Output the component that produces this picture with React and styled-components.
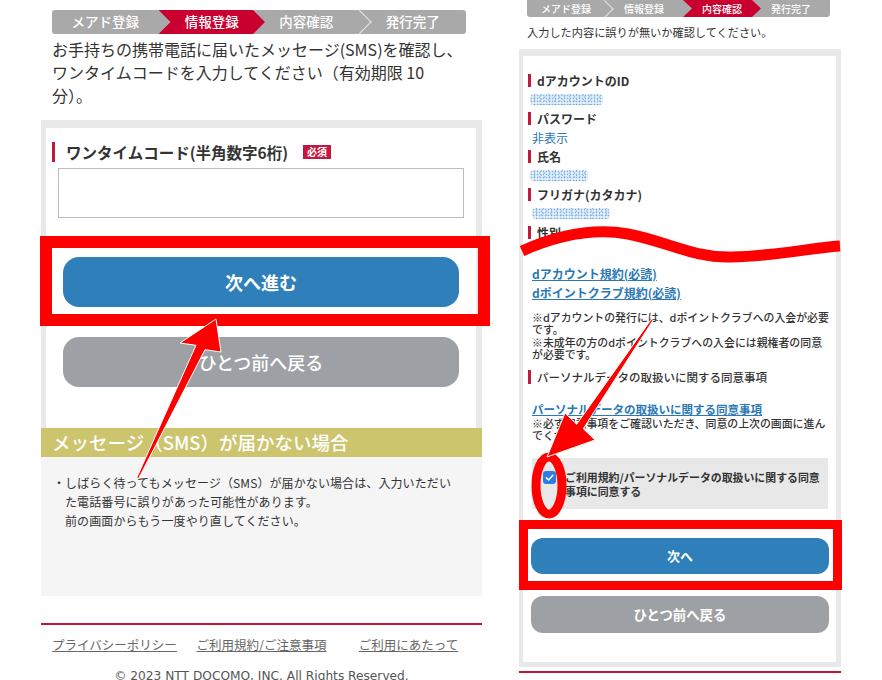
import React from "react";
import styled, { createGlobalStyle, css } from "styled-components";

const GlobalStyle = createGlobalStyle`
  html, body { margin: 0; padding: 0; background: #fff; }
  body {
    font-family: "Noto Sans CJK JP", "Noto Sans", sans-serif;
    color: #333;
  }
  * { box-sizing: border-box; }
`;

const RED = "#c9002f";
const BAR = "#c11a3f";
const BLUE = "#2e7fba";
const GREY_BTN = "#9da1a5";
const FRAME = "#e9e9e9";

const Canvas = styled.div`
  position: relative;
  width: 882px;
  height: 680px;
  overflow: hidden;
  display: flex;
  align-items: flex-start;
  gap: 37px;
  padding-left: 41px;
`;

/* ---------- progress steps ---------- */
const Steps = styled.ol`
  list-style: none;
  margin: ${(p) => p.$m};
  padding: 0;
  display: flex;
  width: ${(p) => p.$w}px;
  height: ${(p) => p.$h}px;
  background: #a9a9a9;
  border-radius: ${(p) => p.$r};
  overflow: hidden;
`;

const Step = styled.li`
  position: relative;
  flex: 1;
  display: flex;
  align-items: center;
  justify-content: center;
  color: #fff;
  font-size: ${(p) => p.$fs}px;
  font-weight: 500;
  line-height: 1;
  white-space: nowrap;
  ${(p) =>
    p.$active &&
    css`
      background: ${RED};
      margin-right: -${p.$d}px;
      z-index: 1;
      clip-path: polygon(
        0 0,
        calc(100% - ${p.$d}px) 0,
        100% 50%,
        calc(100% - ${p.$d}px) 100%,
        0 100%,
        ${p.$d}px 50%
      );
    `}
  ${(p) =>
    p.$sep &&
    css`
      &::after {
        content: "";
        position: absolute;
        top: 50%;
        right: -${p.$s / 2}px;
        width: ${p.$s}px;
        height: ${p.$s}px;
        border-top: 1px solid #e4e4e4;
        border-right: 1px solid #e4e4e4;
        transform: translateY(-50%) rotate(45deg);
      }
    `}
`;

/* ---------- left screen ---------- */
const LeftScreen = styled.section`
  width: 441px;
  flex: none;
  display: flex;
  flex-direction: column;
`;

const Lead = styled.p`
  margin: 4px 0 0 11px;
  font-size: 16px;
  line-height: 23px;
  color: #333;
  white-space: nowrap;
`;

const CodePanel = styled.div`
  margin-top: 13px;
  padding: 8px 6px 0 5px;
  background: ${FRAME};
`;

const CodeCard = styled.div`
  background: #fff;
  padding: 14px 0 41px;
  display: flex;
  flex-direction: column;
`;

const LabelRow = styled.div`
  display: flex;
  align-items: center;
  margin: ${(p) => p.$m};
  height: ${(p) => p.$h}px;
`;

const BarLabel = styled.span`
  display: flex;
  align-items: center;
  height: 100%;
  font-size: ${(p) => p.$fs}px;
  font-weight: ${(p) => p.$fw || 700};
  color: #333;
  white-space: nowrap;
  &::before {
    content: "";
    flex: none;
    width: 3px;
    height: ${(p) => p.$bar}px;
    background: ${BAR};
    margin-right: ${(p) => p.$gap}px;
  }
`;

const Required = styled.span`
  margin-left: 15px;
  height: 14px;
  padding: 0 4px;
  background: #c4163e;
  color: #fff;
  font-size: 10px;
  font-weight: 700;
  line-height: 14px;
`;

const CodeInput = styled.input`
  display: block;
  margin: 6px 12px 0;
  height: 50px;
  border: 1px solid #bdbdbd;
  background: #fff;
  font-size: 16px;
  padding: 0 10px;
  outline: none;
`;

const Button = styled.button`
  display: block;
  border: none;
  color: #fff;
  font-family: inherit;
  text-align: center;
  cursor: pointer;
  background: ${(p) => (p.$primary ? BLUE : GREY_BTN)};
  height: ${(p) => p.$h}px;
  margin: ${(p) => p.$m};
  border-radius: ${(p) => p.$r}px;
  font-size: ${(p) => p.$fs}px;
  font-weight: ${(p) => p.$fw};
`;

const NoticeHead = styled.h2`
  margin: 0;
  height: 29px;
  padding-left: 11px;
  background: #cdc46e;
  color: #fff;
  font-size: 18.5px;
  font-weight: 500;
  line-height: 29px;
  white-space: nowrap;
`;

const NoticeBody = styled.ul`
  list-style: none;
  margin: 0;
  height: 139px;
  padding: 16px 12px 0;
  background: #f5f5f5;
`;

const NoticeItem = styled.li`
  padding-left: 12px;
  text-indent: -12px;
  font-size: 12px;
  line-height: 19px;
  color: #333;
  white-space: nowrap;
  letter-spacing: 0.1px;
`;

const Footer = styled.footer`
  margin-top: 27px;
  border-top: 2px solid #c4142e;
`;

const FooterLinks = styled.nav`
  display: grid;
  grid-template-columns: repeat(3, 1fr);
  margin-top: 11px;
`;

const FooterLink = styled.a`
  justify-self: center;
  color: #666;
  font-size: 12.5px;
  line-height: 18px;
  text-decoration: underline;
  white-space: nowrap;
`;

const Copy = styled.p`
  margin: 13px 0 0;
  text-align: center;
  font-family: "DejaVu Sans", "Noto Sans", sans-serif;
  font-size: 12.2px;
  line-height: 18px;
  color: #555;
`;

/* ---------- right screen ---------- */
const RightScreen = styled.section`
  width: 322px;
  flex: none;
  display: flex;
  flex-direction: column;
`;

const SmallLead = styled.p`
  margin: 7px 0 0 8px;
  font-size: 11.2px;
  line-height: 16px;
  color: #333;
  white-space: nowrap;
`;

const ReviewPanel = styled.div`
  margin-top: 9px;
  padding: 7px 5px 5px 4px;
  background: ${FRAME};
`;

const ReviewCard = styled.div`
  background: #fff;
  padding: 14.5px 0 29px;
  display: flex;
  flex-direction: column;
`;

const Value = styled.div`
  display: flex;
  align-items: center;
  height: 19px;
  margin-left: ${(p) => p.$ml}px;
  font-size: 12px;
  color: #2a78b5;
`;

/* blurred-out personal data */
const Masked = styled.span`
  display: inline-block;
  width: ${(p) => p.$w}px;
  height: 11px;
  border-radius: 4px;
  background-color: rgba(175, 210, 240, 0.35);
  background-image: radial-gradient(circle, rgba(70, 140, 210, 0.6) 0 0.7px, transparent 1.1px),
    radial-gradient(circle, rgba(120, 175, 230, 0.55) 0 0.8px, transparent 1.2px),
    radial-gradient(circle, rgba(40, 110, 190, 0.45) 0 0.6px, transparent 1px);
  background-size: 3px 3px, 5px 4px, 7px 5px;
  background-position: 0 0, 2px 1px, 1px 3px;
  filter: blur(0.6px);
`;

const TextLink = styled.a`
  display: block;
  margin: ${(p) => p.$m};
  color: #2a78b5;
  font-size: ${(p) => p.$fs}px;
  font-weight: 600;
  line-height: ${(p) => p.$lh}px;
  text-decoration: underline;
  white-space: nowrap;
`;

const Note = styled.p`
  margin: ${(p) => p.$m};
  font-size: 10.9px;
  font-weight: 500;
  line-height: 12.5px;
  color: #333;
  white-space: nowrap;
`;

const Consent = styled.label`
  display: flex;
  align-items: flex-start;
  gap: 9px;
  margin: 16px 8px 0 9px;
  height: 51px;
  padding: 12px 0 0 11px;
  background: #e8e8e8;
`;

const CheckMark = styled.span`
  flex: none;
  width: 13px;
  height: 13px;
  margin-top: 1px;
  border-radius: 3px;
  background: #2a7de6;
  display: flex;
  align-items: center;
  justify-content: center;
`;

const ConsentText = styled.span`
  font-size: 10.9px;
  font-weight: 600;
  line-height: 14px;
  color: #333;
  white-space: nowrap;
`;

const BottomRule = styled.div`
  margin-top: 4px;
  height: 2px;
  background: #c4142e;
`;

/* ---------- red markup layer ---------- */
const Markup = styled.svg`
  position: absolute;
  left: 0;
  top: 0;
  width: 882px;
  height: 680px;
  pointer-events: none;
`;

const ReviewItem = ({ label, children }) => (
  <>
    <LabelRow $m="0 0 0 5px" $h={19}>
      <BarLabel $fs={12} $bar={13} $gap={6}>
        {label}
      </BarLabel>
    </LabelRow>
    {children}
  </>
);

export default function App() {
  return (
    <>
      <GlobalStyle />
      <Canvas>
        <LeftScreen>
          <Steps $w={414} $h={24} $m="10px 0 0 11px" $r="3px">
            <Step $fs={13.5}>メアド登録</Step>
            <Step $fs={13.5} $active $d={12}>
              情報登録
            </Step>
            <Step $fs={13.5} $sep $s={17}>
              内容確認
            </Step>
            <Step $fs={13.5}>発行完了</Step>
          </Steps>
          <Lead>
            お手持ちの携帯電話に届いたメッセージ(SMS)を確認し、
            <br />
            ワンタイムコードを入力してください（有効期限 10
            <br />
            分）。
          </Lead>
          <CodePanel>
            <CodeCard>
              <LabelRow $m="0 0 0 6px" $h={20}>
                <BarLabel $fs={15.5} $bar={20} $gap={11}>
                  ワンタイムコード(半角数字6桁)
                </BarLabel>
                <Required>必須</Required>
              </LabelRow>
              <CodeInput type="text" inputMode="numeric" aria-label="ワンタイムコード" />
              <Button $primary $h={50} $m="39px 17px 0" $r={16} $fs={18} $fw={600}>
                次へ進む
              </Button>
              <Button $h={50} $m="30px 17px 0" $r={16} $fs={18} $fw={500}>
                ひとつ前へ戻る
              </Button>
            </CodeCard>
          </CodePanel>
          <NoticeHead>メッセージ（SMS）が届かない場合</NoticeHead>
          <NoticeBody>
            <NoticeItem>
              ・しばらく待ってもメッセージ（SMS）が届かない場合は、入力いただい
              <br />
              た電話番号に誤りがあった可能性があります。
              <br />
              前の画面からもう一度やり直してください。
            </NoticeItem>
          </NoticeBody>
          <Footer>
            <FooterLinks>
              <FooterLink href="#">プライバシーポリシー</FooterLink>
              <FooterLink href="#">ご利用規約/ご注意事項</FooterLink>
              <FooterLink href="#">ご利用にあたって</FooterLink>
            </FooterLinks>
            <Copy>© 2023 NTT DOCOMO, INC. All Rights Reserved.</Copy>
          </Footer>
        </LeftScreen>

        <RightScreen>
          <Steps $w={303} $h={17} $m="0 0 0 8px" $r="0 0 3px 3px">
            <Step $fs={10} $sep $s={12}>
              メアド登録
            </Step>
            <Step $fs={10}>情報登録</Step>
            <Step $fs={10} $active $d={9}>
              内容確認
            </Step>
            <Step $fs={10}>発行完了</Step>
          </Steps>
          <SmallLead>入力した内容に誤りが無いか確認してください。</SmallLead>
          <ReviewPanel>
            <ReviewCard>
              <ReviewItem label="dアカウントのID">
                <Value $ml={7}>
                  <Masked $w={73} />
                </Value>
              </ReviewItem>
              <ReviewItem label="パスワード">
                <Value $ml={9}>非表示</Value>
              </ReviewItem>
              <ReviewItem label="氏名">
                <Value $ml={7}>
                  <Masked $w={58} />
                </Value>
              </ReviewItem>
              <ReviewItem label="フリガナ(カタカナ)">
                <Value $ml={9}>
                  <Masked $w={78} />
                </Value>
              </ReviewItem>
              <ReviewItem label="性別" />

              <TextLink href="#" $m="22px 0 0 9px" $fs={12} $lh={19}>
                dアカウント規約(必読)
              </TextLink>
              <TextLink href="#" $m="0 0 0 9px" $fs={12} $lh={19}>
                dポイントクラブ規約(必読)
              </TextLink>
              <Note $m="9px 0 0 9px">
                ※dアカウントの発行には、dポイントクラブへの入会が必要
                <br />
                です。
                <br />
                ※未成年の方のdポイントクラブへの入会には親権者の同意
                <br />
                が必要です。
              </Note>
              <LabelRow $m="8px 0 0 5px" $h={16}>
                <BarLabel $fs={11.5} $fw={500} $bar={14} $gap={6}>
                  パーソナルデータの取扱いに関する同意事項
                </BarLabel>
              </LabelRow>
              <TextLink href="#" $m="16px 0 0 9px" $fs={11.5} $lh={16}>
                パーソナルデータの取扱いに関する同意事項
              </TextLink>
              <Note $m="0 0 0 9px">
                ※必ず同意事項をご確認いただき、同意の上次の画面に進ん
                <br />
                でください。
              </Note>
              <Consent>
                <CheckMark>
                  <svg width="11" height="11" viewBox="0 0 14 14">
                    <path
                      d="M3 7.4 L5.9 10.2 L11.2 4.2"
                      stroke="#fff"
                      strokeWidth="2"
                      fill="none"
                      strokeLinecap="round"
                      strokeLinejoin="round"
                    />
                  </svg>
                </CheckMark>
                <ConsentText>
                  ご利用規約/パーソナルデータの取扱いに関する同意
                  <br />
                  事項に同意する
                </ConsentText>
              </Consent>
              <Button $primary $h={36} $m="29px 7px 0 8px" $r={12} $fs={13} $fw={700}>
                次へ
              </Button>
              <Button $h={37} $m="22px 7px 0 8px" $r={12} $fs={13.4} $fw={600}>
                ひとつ前へ戻る
              </Button>
            </ReviewCard>
          </ReviewPanel>
          <BottomRule />
        </RightScreen>

        <Markup viewBox="0 0 882 680">
          {/* highlight frames */}
          <rect x="46" y="242" width="438" height="78" fill="none" stroke="#ff0000" strokeWidth="12" />
          <rect x="523.5" y="524.5" width="314" height="61" fill="none" stroke="#ff0000" strokeWidth="9" />
          {/* torn-page wave */}
          <path
            d="M522 251 C 558 235, 594 228, 628 234 C 666 241, 692 258, 732 257 C 776 256, 810 248, 840 246"
            fill="none"
            stroke="#ff0000"
            strokeWidth="11"
          />
          {/* ring around the checkbox */}
          <ellipse cx="549" cy="485.5" rx="13" ry="28.5" fill="none" stroke="#ff0000" strokeWidth="9" />
          {/* pointer arrows */}
          <polygon
            points="216,319 180,343 196,345.3 136.6,478.1 138.4,478.9 205,349.7 221,352"
            fill="#ff0000"
            stroke="#fff"
            strokeWidth="1"
            strokeLinejoin="round"
          />
          <polygon
            points="547,457 565,413 576.7,424.3 651.2,319.4 652.8,320.6 583.3,428.7 595,440"
            fill="#ff0000"
            stroke="#fff"
            strokeWidth="1"
            strokeLinejoin="round"
          />
        </Markup>
      </Canvas>
    </>
  );
}
